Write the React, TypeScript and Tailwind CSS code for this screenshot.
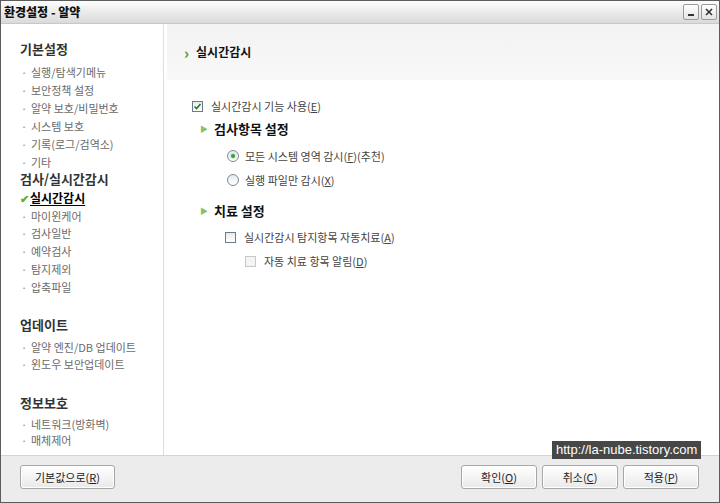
import React from "react";

const FONT = { fontFamily: '"Noto Sans CJK KR", "Noto Sans", sans-serif' };

type Group = { title: string; items: string[]; active?: string; mt: string; itemMt: string; itemH: string };

const GROUPS: Group[] = [
  { title: "기본설정", items: ["실행/탐색기메뉴", "보안정책 설정", "알약 보호/비밀번호", "시스템 보호", "기록(로그/검역소)", "기타"], mt: "mt-[17px]", itemMt: "mt-[6px]", itemH: "h-[18px]" },
  { title: "검사/실시간감시", active: "실시간감시", items: ["마이윈케어", "검사일반", "예약검사", "탐지제외", "압축파일"], mt: "mt-0", itemMt: "mt-[2px]", itemH: "h-[17.8px]" },
  { title: "업데이트", items: ["알약 엔진/DB 업데이트", "윈도우 보안업데이트"], mt: "mt-[21px]", itemMt: "mt-[6px]", itemH: "h-[17px]" },
  { title: "정보보호", items: ["네트워크(방화벽)", "매체제어"], mt: "mt-[22px]", itemMt: "mt-[5px]", itemH: "h-[16px]" },
];

function U({ k }: { k: string }) {
  return <span className="underline">{k}</span>;
}

function Check({ checked, disabled }: { checked?: boolean; disabled?: boolean }) {
  return (
    <span
      className={`flex h-[11px] w-[11px] items-center justify-center border ${
        disabled ? "border-[#c8c8c8] bg-[#f4f4f4]" : "border-[#6d7c8c] bg-gradient-to-b from-[#e8ebee] to-white"
      }`}
    >
      {checked && (
        <svg width="9" height="9" viewBox="0 0 9 9">
          <path d="M1.5 4.5 L3.6 6.6 L7.5 2" fill="none" stroke="#2b7a1c" strokeWidth="1.6" />
        </svg>
      )}
    </span>
  );
}

function Radio({ checked }: { checked?: boolean }) {
  return (
    <span className="flex h-[12px] w-[12px] items-center justify-center rounded-full border border-[#7d8a99] bg-gradient-to-b from-[#e6e9ec] to-white">
      {checked && <span className="h-[4px] w-[4px] rounded-full bg-[#3aa13a] shadow-[0_0_2px_#5fd05f]" />}
    </span>
  );
}

function Btn({ children, w }: { children: React.ReactNode; w: string }) {
  return (
    <div
      className={`${w} flex h-[24px] items-center justify-center rounded-[3px] border border-[#a7a7a7] bg-gradient-to-b from-white to-[#e9e9e9] text-[11px] text-[#222] shadow-[inset_0_0_0_1px_#fff]`}
    >
      {children}
    </div>
  );
}

export default function App() {
  return (
    <div style={FONT} className="relative flex h-[503px] w-[720px] flex-col overflow-hidden border border-[#5c5c5c] bg-white">
      {/* title bar */}
      <div className="flex h-[23px] shrink-0 items-center justify-between border-b border-[#c9c9c9] bg-gradient-to-b from-[#fdfdfd] to-[#dadada] pl-[3px] pr-[2px]">
        <span className="text-[12px] font-black text-[#111]">환경설정 - 알약</span>
        <div className="flex gap-[2px]">
          <div className="flex h-[16px] w-[16px] items-end justify-center rounded-[2px] border border-[#9a9a9a] bg-gradient-to-b from-white to-[#e4e4e4] pb-[3px]">
            <span className="h-[2px] w-[6px] bg-[#333]" />
          </div>
          <div className="flex h-[16px] w-[16px] items-center justify-center rounded-[2px] border border-[#9a9a9a] bg-gradient-to-b from-white to-[#e4e4e4]">
            <svg width="8" height="8" viewBox="0 0 8 8">
              <path d="M1 1 L7 7 M7 1 L1 7" stroke="#333" strokeWidth="1.6" />
            </svg>
          </div>
        </div>
      </div>

      {/* body */}
      <div className="flex flex-1">
        <aside className="w-[163px] shrink-0 border-r border-[#dedede] pl-[19px]">
          {GROUPS.map((g) => (
            <div key={g.title} className={g.mt}>
              <div className="h-[16px] text-[13px] font-bold leading-[16px] text-[#333]">{g.title}</div>
              <div className={g.itemMt}>
                {g.active && (
                  <div className="flex h-[18px] items-center text-[12px] font-bold leading-[18px] text-black">
                    <span className="mr-[1px] text-[11px] text-[#6fae1e]">✔</span>
                    <span className="underline underline-offset-2">{g.active}</span>
                  </div>
                )}
                {g.items.map((it) => (
                  <div key={it} className={`flex ${g.itemH} items-center text-[11px] text-[#6a6a6a]`}>
                    <span className="w-[11px] pl-[1px] text-[#888]">·</span>
                    <span>{it}</span>
                  </div>
                ))}
              </div>
            </div>
          ))}
        </aside>

        <main className="flex-1 pl-[3px]">
          <div className="flex h-[56px] items-center bg-gradient-to-b from-[#f2f2f2] to-[#f9f9f9] pl-[17px]">
            <span className="mr-[7px] text-[15px] font-black leading-none text-[#5a9e1c]">›</span>
            <span className="text-[12px] font-bold text-[#111]">실시간감시</span>
          </div>

          <div className="pl-[25px] text-[11px] text-[#444]">
            <div className="mt-[17px] flex h-[18px] items-center gap-[8px]">
              <Check checked />
              <span>
                실시간감시 기능 사용(<U k="E" />)
              </span>
            </div>
            <div className="mt-[5px] flex h-[18px] items-center pl-[8px]">
              <span className="mr-[6px] text-[8px] text-[#8cc063]">▶</span>
              <span className="text-[13px] font-bold text-[#111]">검사항목 설정</span>
            </div>
            <div className="mt-[9px] flex h-[18px] items-center gap-[6px] pl-[35px]">
              <Radio checked />
              <span>
                모든 시스템 영역 감시(<U k="F" />)(추천)
              </span>
            </div>
            <div className="mt-[6px] flex h-[18px] items-center gap-[6px] pl-[35px]">
              <Radio />
              <span>
                실행 파일만 감시(<U k="X" />)
              </span>
            </div>
            <div className="mt-[13px] flex h-[18px] items-center pl-[8px]">
              <span className="mr-[6px] text-[8px] text-[#8cc063]">▶</span>
              <span className="text-[13px] font-bold text-[#111]">치료 설정</span>
            </div>
            <div className="mt-[8px] flex h-[18px] items-center gap-[8px] pl-[33px]">
              <Check />
              <span>
                실시간감시 탐지항목 자동치료(<U k="A" />)
              </span>
            </div>
            <div className="mt-[6px] flex h-[18px] items-center gap-[8px] pl-[53px]">
              <Check disabled />
              <span>
                자동 치료 항목 알림(<U k="D" />)
              </span>
            </div>
          </div>
        </main>
      </div>

      {/* footer */}
      <div className="flex h-[47px] shrink-0 items-start justify-between border-t border-[#d4d4d4] bg-[#ececec] pl-[19px] pr-[20px] pt-[9px]">
        <Btn w="w-[95px]">
          기본값으로(<U k="R" />)
        </Btn>
        <div className="flex gap-[5px]">
          <Btn w="w-[76px]">
            확인(<U k="O" />)
          </Btn>
          <Btn w="w-[76px]">
            취소(<U k="C" />)
          </Btn>
          <Btn w="w-[76px]">
            적용(<U k="P" />)
          </Btn>
        </div>
      </div>

      {/* watermark overlay */}
      <div
        className="absolute left-[551px] top-[440px] bg-[#474747] px-[4px] text-[13px] leading-[18px] text-white"
        style={{ fontFamily: '"Liberation Sans", sans-serif' }}
      >
        http://la-nube.tistory.com
      </div>
    </div>
  );
}
